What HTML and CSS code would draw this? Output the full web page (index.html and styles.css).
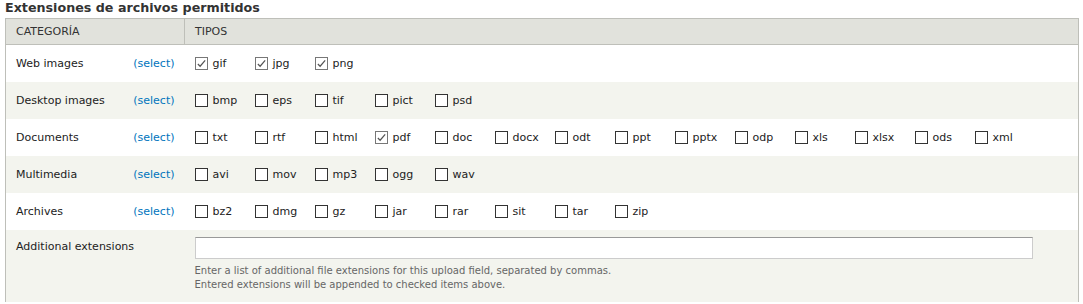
FILE: index.html
```html
<!DOCTYPE html>
<html>
<head>
    <title>Extensiones de archivos permitidos</title>
    <link rel="stylesheet" href="styles.css">
</head>
<body>
    <div class="field">
        <div class="field-title">Extensiones de archivos permitidos</div>
        <table class="ext-table">
            <thead>
                <tr>
                    <th class="col-cat">CATEGORÍA</th>
                    <th>TIPOS</th>
                </tr>
            </thead>
            <tbody>
                <tr class="odd">
                    <td class="col-cat"><div class="cat"><span>Web images</span><a href="#">(select)</a></div></td>
                    <td>
                        <div class="types">
                            <label class="type"><span class="box checked"><svg viewBox="0 0 12 12"><path d="M2 6.5 L4.5 9 L10 2.5" /></svg></span>gif</label>
                            <label class="type"><span class="box checked"><svg viewBox="0 0 12 12"><path d="M2 6.5 L4.5 9 L10 2.5" /></svg></span>jpg</label>
                            <label class="type"><span class="box checked"><svg viewBox="0 0 12 12"><path d="M2 6.5 L4.5 9 L10 2.5" /></svg></span>png</label>
                        </div>
                    </td>
                </tr>
                <tr class="even">
                    <td class="col-cat"><div class="cat"><span>Desktop images</span><a href="#">(select)</a></div></td>
                    <td>
                        <div class="types">
                            <label class="type"><span class="box"></span>bmp</label>
                            <label class="type"><span class="box"></span>eps</label>
                            <label class="type"><span class="box"></span>tif</label>
                            <label class="type"><span class="box"></span>pict</label>
                            <label class="type"><span class="box"></span>psd</label>
                        </div>
                    </td>
                </tr>
                <tr class="odd">
                    <td class="col-cat"><div class="cat"><span>Documents</span><a href="#">(select)</a></div></td>
                    <td>
                        <div class="types">
                            <label class="type"><span class="box"></span>txt</label>
                            <label class="type"><span class="box"></span>rtf</label>
                            <label class="type"><span class="box"></span>html</label>
                            <label class="type"><span class="box checked"><svg viewBox="0 0 12 12"><path d="M2 6.5 L4.5 9 L10 2.5" /></svg></span>pdf</label>
                            <label class="type"><span class="box"></span>doc</label>
                            <label class="type"><span class="box"></span>docx</label>
                            <label class="type"><span class="box"></span>odt</label>
                            <label class="type"><span class="box"></span>ppt</label>
                            <label class="type"><span class="box"></span>pptx</label>
                            <label class="type"><span class="box"></span>odp</label>
                            <label class="type"><span class="box"></span>xls</label>
                            <label class="type"><span class="box"></span>xlsx</label>
                            <label class="type"><span class="box"></span>ods</label>
                            <label class="type"><span class="box"></span>xml</label>
                        </div>
                    </td>
                </tr>
                <tr class="even">
                    <td class="col-cat"><div class="cat"><span>Multimedia</span><a href="#">(select)</a></div></td>
                    <td>
                        <div class="types">
                            <label class="type"><span class="box"></span>avi</label>
                            <label class="type"><span class="box"></span>mov</label>
                            <label class="type"><span class="box"></span>mp3</label>
                            <label class="type"><span class="box"></span>ogg</label>
                            <label class="type"><span class="box"></span>wav</label>
                        </div>
                    </td>
                </tr>
                <tr class="odd">
                    <td class="col-cat"><div class="cat"><span>Archives</span><a href="#">(select)</a></div></td>
                    <td>
                        <div class="types">
                            <label class="type"><span class="box"></span>bz2</label>
                            <label class="type"><span class="box"></span>dmg</label>
                            <label class="type"><span class="box"></span>gz</label>
                            <label class="type"><span class="box"></span>jar</label>
                            <label class="type"><span class="box"></span>rar</label>
                            <label class="type"><span class="box"></span>sit</label>
                            <label class="type"><span class="box"></span>tar</label>
                            <label class="type"><span class="box"></span>zip</label>
                        </div>
                    </td>
                </tr>
                <tr class="even">
                    <td class="col-cat extra-label">Additional extensions</td>
                    <td class="extra">
                        <input type="text" class="form-text">
                        <div class="description">
                            Enter a list of additional file extensions for this upload field, separated by commas.<br>
                            Entered extensions will be appended to checked items above.
                        </div>
                    </td>
                </tr>
            </tbody>
        </table>
    </div>
</body>
</html>
```

FILE: styles.css
```css
body {
    margin: 0;
    padding: 0 4px 0 5px;
    font-family: "DejaVu Sans", Verdana, sans-serif;
    font-size: 11px;
    color: #333;
    background: #fff;
}

.field-title {
    font-weight: bold;
    font-size: 12.7px;
    color: #333;
    height: 18px;
    line-height: 16px;
}

.ext-table {
    width: 100%;
    border-collapse: collapse;
    border: 1px solid #bebfb9;
    border-bottom: none;
}

.ext-table th {
    background: #e1e2dc;
    border: 1px solid #bebfb9;
    text-align: left;
    font-weight: normal;
    color: #333;
    height: 25px;
    padding: 0 10px;
}

.ext-table td {
    height: 37px;
    padding: 0 10px;
    vertical-align: middle;
    color: #222;
}

.col-cat {
    width: 158px;
}

.ext-table tr.odd td {
    background: #fff;
}

.ext-table tr.even td {
    background: #f3f4ee;
}

.cat {
    display: flex;
    justify-content: space-between;
}

.cat a {
    color: #0074bd;
    text-decoration: none;
}

.types {
    display: flex;
}

.type {
    display: flex;
    align-items: center;
    width: 60px;
    flex: none;
}

.box {
    width: 11px;
    height: 11px;
    border: 1px solid #333;
    background: #fff;
    margin-right: 5px;
    display: flex;
}

.box.checked {
    border-color: #777;
}

.box svg {
    width: 11px;
    height: 11px;
    fill: none;
    stroke: #555;
    stroke-width: 1.3;
}

.extra-label {
    vertical-align: top !important;
    padding-top: 10px !important;
}

.extra {
    padding-top: 7px !important;
    padding-bottom: 10px !important;
    height: auto !important;
}

.form-text {
    display: block;
    width: 838px;
    height: 22px;
    box-sizing: border-box;
    border: 1px solid #ccc;
    border-top-color: #999;
    background: #fff;
    margin: 0 0 5px;
}

.description {
    font-size: 10px;
    color: #666;
    line-height: 14px;
}
```
